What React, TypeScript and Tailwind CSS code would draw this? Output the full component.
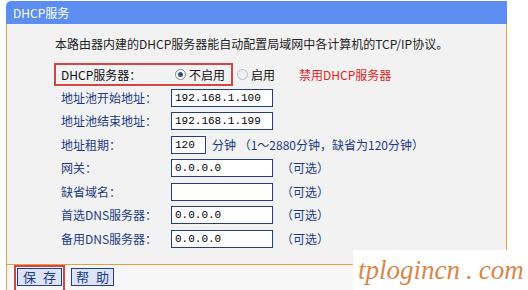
import React from 'react';

const cjk = { fontFamily: '"Noto Sans CJK SC", "Liberation Sans", sans-serif' };
const mono = { fontFamily: '"Liberation Mono", "Noto Sans CJK SC", monospace' };

type Row = { label: string; value: string; note?: boolean };

const rows: Row[] = [
  { label: '地址池开始地址：', value: '192.168.1.100' },
  { label: '地址池结束地址：', value: '192.168.1.199' },
  { label: '地址租期：', value: '120' },
  { label: '网关：', value: '0.0.0.0', note: true },
  { label: '缺省域名：', value: '', note: true },
  { label: '首选DNS服务器：', value: '0.0.0.0', note: true },
  { label: '备用DNS服务器：', value: '0.0.0.0', note: true }
];

function Radio({ checked }: { checked?: boolean }) {
  return (
    <span
      className={`inline-flex h-[11px] w-[11px] items-center justify-center rounded-full border ${
        checked ? 'border-[#7c8798] bg-white' : 'border-[#b9bdc5] bg-[#eeeeee]'
      }`}
    >
      {checked ? <span className="h-[5px] w-[5px] rounded-full bg-[#34507e]" /> : null}
    </span>
  );
}

function Field({ value, width }: { value: string; width: string }) {
  return (
    <div
      className={`flex h-[18px] ${width} items-center border border-[#243f7a] bg-white pl-[3px] text-[11px] text-black`}
      style={mono}
    >
      {value}
    </div>
  );
}

function Btn({ a, b, className }: { a: string; b: string; className?: string }) {
  return (
    <button
      className={`flex h-[18px] items-center justify-center gap-[7px] whitespace-nowrap border border-[#243f7a] bg-[#dde3f6] text-[13px] leading-[16px] text-[#1b3a83] ${className ?? ''}`}
    >
      <span>{a}</span>
      <span>{b}</span>
    </button>
  );
}

export default function App() {
  return (
    <div className="relative h-[290px] w-[528px] overflow-hidden bg-white" style={cjk}>
      <div className="ml-[6px] w-[501px] pt-[1px]">
        {/* title bar */}
        <div className="flex h-[23px] items-center rounded-tl-[5px] bg-[#5b8ef0] pl-[7px] text-[12px] text-white">
          DHCP服务
        </div>

        {/* body */}
        <div className="h-[241px] border-x border-b border-[#e2a044] bg-[#f2f2f2] pl-[47px] pt-[12px]">
          <p className="h-[16px] pl-[1px] text-[12px] leading-[16px] text-[#222]">
            本路由器内建的DHCP服务器能自动配置局域网中各计算机的TCP/IP协议。
          </p>

          <div className="mt-[11px] flex items-center">
            <div className="flex h-[23px] w-[179px] items-center border-2 border-[#d54545] pl-[5px] text-[12px] text-[#111]">
              <span className="w-[114px]">DHCP服务器：</span>
              <Radio checked />
              <span className="ml-[3px]">不启用</span>
            </div>
            <div className="ml-[4px] flex items-center text-[12px] text-[#111]">
              <Radio />
              <span className="ml-[3px]">启用</span>
            </div>
            <span className="ml-[24px] text-[12px] text-[#e1241f]">禁用DHCP服务器</span>
          </div>

          <div className="pl-[7px]">
            {rows.map((row) => (
              <div key={row.label} className="flex h-[23.5px] items-center text-[12px] text-[#1b3a83]">
                <span className="w-[110px]">{row.label}</span>
                {row.value === '120' ? (
                  <>
                    <Field value={row.value} width="w-[35px]" />
                    <span className="ml-[6px]">分钟 （1～2880分钟，缺省为120分钟）</span>
                  </>
                ) : (
                  <>
                    <Field value={row.value} width="w-[102px]" />
                    {row.note ? <span className="ml-[8px]">（可选）</span> : null}
                  </>
                )}
              </div>
            ))}
          </div>
        </div>

        {/* buttons */}
        <div className="flex h-[25px] items-start border-l border-[#e2a044] bg-[#f6f6f6] pl-[7px]">
          <div className="flex h-[27px] items-start border-2 border-[#d54545] px-[1px] pt-[1px]">
            <Btn a="保" b="存" className="w-[45px]" />
          </div>
          <Btn a="帮" b="助" className="ml-[6px] mt-[3px] w-[43px]" />
        </div>
      </div>

      {/* watermark */}
      <div className="absolute left-[353px] top-[250px] flex h-[40px] w-[175px] items-center bg-white pl-[5px]">
        <span
          className="text-[27px] italic text-[#d8874c]"
          style={{ fontFamily: '"Liberation Serif", "DejaVu Serif", serif' }}
        >
          tplogincn<span className="mx-[6px]">.</span>com
        </span>
      </div>
    </div>
  );
}
